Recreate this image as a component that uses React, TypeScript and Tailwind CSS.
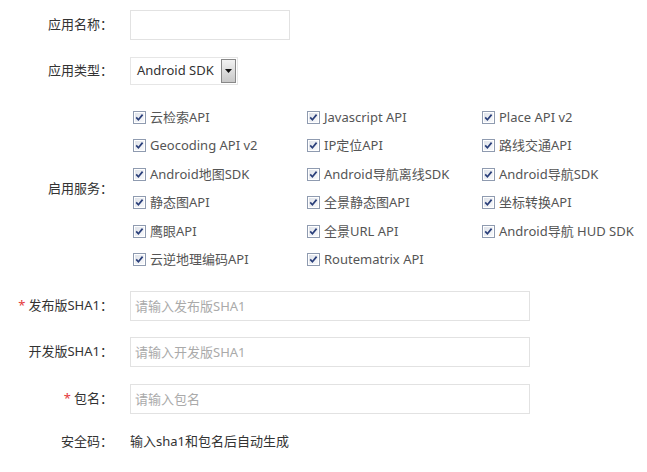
import React from "react";

const services = [
  "云检索API",
  "Javascript API",
  "Place API v2",
  "Geocoding API v2",
  "IP定位API",
  "路线交通API",
  "Android地图SDK",
  "Android导航离线SDK",
  "Android导航SDK",
  "静态图API",
  "全景静态图API",
  "坐标转换API",
  "鹰眼API",
  "全景URL API",
  "Android导航 HUD SDK",
  "云逆地理编码API",
  "Routematrix API",
];

/** Old-style Windows checkbox, always ticked here. */
function Tick() {
  return (
    <svg width="13" height="13" viewBox="0 0 13 13" className="flex-none">
      <defs>
        <linearGradient id="cbg" x1="0" y1="0" x2="1" y2="1">
          <stop offset="0" stopColor="#dfe3ea" />
          <stop offset="1" stopColor="#f8f9fb" />
        </linearGradient>
      </defs>
      <rect x="0.5" y="0.5" width="12" height="12" fill="#fff" stroke="#8f9bb0" />
      <rect x="2" y="2" width="9" height="9" fill="url(#cbg)" />
      <path d="M3.2 6.4 L5.4 8.8 L9.6 3.6" fill="none" stroke="#2a3f7a" strokeWidth="1.7" />
    </svg>
  );
}

function Label({ children, required }: { children: React.ReactNode; required?: boolean }) {
  return (
    <div className="w-[113px] flex-none text-right text-[13px] text-[#333]">
      {required && <span className="mr-[3px] text-[#e4393c]">*</span>}
      {children}
    </div>
  );
}

function TextInput({ placeholder, width }: { placeholder?: string; width: string }) {
  return (
    <input
      placeholder={placeholder}
      className={`${width} ml-[17px] h-[30px] border border-[#e2e2e2] bg-white px-[4px] text-[13px] text-[#333] outline-none placeholder:text-[#aaa]`}
    />
  );
}

export default function App() {
  return (
    <div
      className="h-[472px] w-[647px] bg-white"
      style={{ fontFamily: '"Noto Sans", "Noto Sans CJK SC", sans-serif' }}
    >
      <div className="flex flex-col">
        <div className="mt-[10px] flex h-[30px] items-center">
          <Label>应用名称：</Label>
          <TextInput width="w-[160px]" />
        </div>

        <div className="mt-[17px] flex h-[28px] items-center">
          <Label>应用类型：</Label>
          <div className="ml-[17px] flex h-[28px] w-[108px] items-center border border-[#e6e6e6] bg-white">
            <span className="flex-1 pl-[6px] text-[13px] text-[#333]">Android SDK</span>
            <span className="mr-[1px] flex h-[24px] w-[15px] items-center justify-center border border-[#888] bg-gradient-to-b from-[#f2f2f2] to-[#c8c8c8]">
              <svg width="7" height="4" viewBox="0 0 7 4">
                <path d="M0 0 H7 L3.5 4 Z" fill="#111" />
              </svg>
            </span>
          </div>
        </div>

        <div className="mt-[18px] flex items-center">
          <Label>启用服务：</Label>
          <div className="ml-[20px] grid grid-cols-[174px_175px_160px]">
            {services.map((name) => (
              <label key={name} className="flex h-[28.5px] items-center gap-[4px] text-[13px] text-[#555]">
                <Tick />
                {name}
              </label>
            ))}
          </div>
        </div>

        <div className="mt-[17px] flex h-[30px] items-center">
          <Label required>发布版SHA1：</Label>
          <TextInput width="w-[400px]" placeholder="请输入发布版SHA1" />
        </div>

        <div className="mt-[16px] flex h-[30px] items-center">
          <Label>开发版SHA1：</Label>
          <TextInput width="w-[400px]" placeholder="请输入开发版SHA1" />
        </div>

        <div className="mt-[17px] flex h-[30px] items-center">
          <Label required>包名：</Label>
          <TextInput width="w-[400px]" placeholder="请输入包名" />
        </div>

        <div className="mt-[13px] flex h-[30px] items-center">
          <Label>安全码：</Label>
          <span className="ml-[17px] text-[13px] text-[#333]">输入sha1和包名后自动生成</span>
        </div>
      </div>
    </div>
  );
}
